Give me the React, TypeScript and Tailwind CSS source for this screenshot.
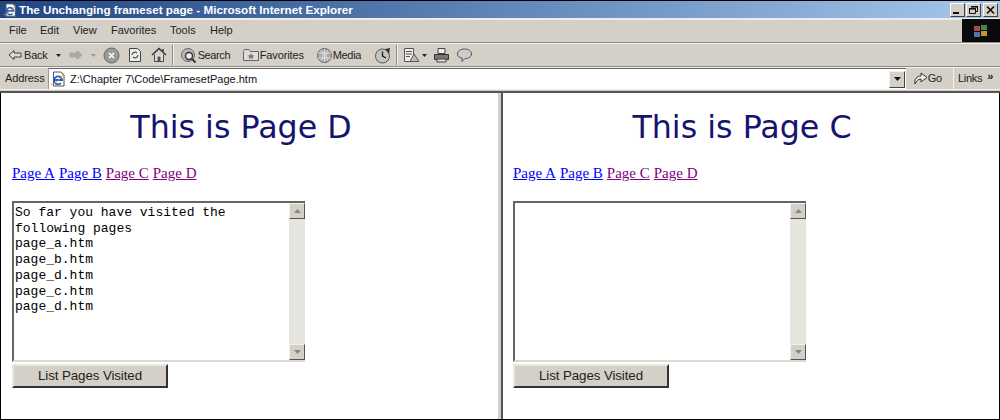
import React from "react";

const ui = "font-['Liberation_Sans',Arial,sans-serif]";

function Globe({ s = 14 }: { s?: number }) {
  return (
    <svg width={s} height={s} viewBox="0 0 16 16" className="shrink-0">
      <path d="M3.5 1h7.5l3 3v11h-10.5z" fill="#fff" stroke="#555" strokeWidth="1" />
      <path d="M4.5 9h7.5a4 4 0 1 0-1 3" fill="none" stroke="#1c62c4" strokeWidth="1.8" />
      <path d="M1 13.5C5 13 11 8 14 2" fill="none" stroke="#e0a030" strokeWidth="1" />
    </svg>
  );
}

function WinBtn({ children }: { children: React.ReactNode }) {
  return (
    <div className="w-[15px] h-[14px] bg-[#d4d0c8] border border-t-white border-l-white border-r-[#404040] border-b-[#404040] flex items-center justify-center">
      <svg width="11" height="10" viewBox="0 0 11 10">{children}</svg>
    </div>
  );
}

function Arrow({ dir, gray }: { dir: "l" | "r"; gray?: boolean }) {
  const c = gray ? "#a8a8a8" : "#404040";
  return (
    <svg width="14" height="12" viewBox="0 0 14 12" className="shrink-0">
      {dir === "l" ? (
        <path d="M1 6L6 1.5V4H13V8H6V10.5Z" fill={gray ? c : "#ddd"} stroke={c} strokeWidth="1" />
      ) : (
        <path d="M13 6L8 1.5V4H1V8H8V10.5Z" fill={c} stroke={c} strokeWidth="1" />
      )}
    </svg>
  );
}

function Caret({ c = "#222" }: { c?: string }) {
  return (
    <svg width="5" height="3" viewBox="0 0 5 3" className="block shrink-0">
      <path d="M0 0H5L2.5 3Z" fill={c} />
    </svg>
  );
}

function ScrollBtn({ up }: { up?: boolean }) {
  return (
    <div className="w-[16px] h-[16px] bg-[#d4d0c8] border border-t-[#f2f0ec] border-l-[#f2f0ec] border-r-[#555] border-b-[#555] flex items-center justify-center">
      <svg width="7" height="4" viewBox="0 0 7 4">
        <path d={up ? "M0 4H7L3.5 0Z" : "M0 0H7L3.5 4Z"} fill="#888" />
      </svg>
    </div>
  );
}

function Frame({ page, lines, right }: { page: string; lines: string[]; right?: boolean }) {
  return (
    <div className={`${right ? "flex-1 pl-[10px]" : "w-[497px] pl-[11px]"} pt-[12px] bg-white min-w-0`}>
      <h1 className="font-['DejaVu_Sans',Verdana,sans-serif] text-[31.7px] leading-[44px] font-normal text-[#14146e] text-center h-[44px] w-[458px]">
        This is Page {page}
      </h1>
      <div className="mt-[15px] h-[18px] leading-[18px] text-[15px] font-['Liberation_Serif','Times_New_Roman',serif] flex gap-[4px]">
        <a className="underline text-[#0000ff]">Page A</a>
        <a className="underline text-[#0000ff]">Page B</a>
        <a className="underline text-[#800080]">Page C</a>
        <a className="underline text-[#800080]">Page D</a>
      </div>
      <div className="mt-[19px] w-[293px] h-[161px] flex border-2 border-t-[#666] border-l-[#666] border-r-0 border-b-[#dcdad4]">
        <div className="flex-1 pl-[1px] pt-[2px] font-['Liberation_Mono','Courier_New',monospace] text-[13px] leading-[15.7px] text-black whitespace-pre">
          {lines.join("\n")}
        </div>
        <div className="w-[16px] bg-[#e6e4df] flex flex-col justify-between">
          <ScrollBtn up />
          <ScrollBtn />
        </div>
      </div>
      <div className={`mt-[2px] w-[156px] h-[24px] bg-[#d4d0c8] border-2 border-t-[#e8e6e1] border-l-[#e8e6e1] border-r-[#333] border-b-[#333] flex items-center justify-center ${ui} text-[13.33px] text-[#222] tracking-[-0.1px]`}>
        List Pages Visited
      </div>
    </div>
  );
}

export default function App() {
  return (
    <div className={`w-[1000px] h-[420px] overflow-hidden bg-white flex flex-col ${ui}`}>
      {/* title bar */}
      <div className="h-[18px] shrink-0 border-t border-black bg-gradient-to-r from-[#1f4684] to-[#a7c8ec] flex items-center pl-[3px] pr-[2px]">
        <Globe s={14} />
        <span className="ml-[2px] text-white font-bold text-[11.7px] leading-none">
          The Unchanging frameset page - Microsoft Internet Explorer
        </span>
        <div className="ml-auto flex">
          <WinBtn>
            <rect x="1" y="7" width="6" height="2" fill="#111" />
          </WinBtn>
          <div className="ml-[1px]">
            <WinBtn>
              <path d="M3.5 1.5h6v5h-2M1.5 3.5h6v5h-6z" fill="none" stroke="#111" strokeWidth="1" />
              <rect x="3" y="1" width="7" height="1.6" fill="#111" />
              <rect x="1" y="3" width="7" height="1.6" fill="#111" />
            </WinBtn>
          </div>
          <div className="ml-[2px]">
            <WinBtn>
              <path d="M2 1.5L9 8.5M9 1.5L2 8.5" stroke="#111" strokeWidth="1.7" />
            </WinBtn>
          </div>
        </div>
      </div>

      {/* menu */}
      <div className="h-[25px] shrink-0 bg-[#d4d0c8] border-t-2 border-t-[#eeece8] border-b-[1px] border-b-[#8f8d88] flex items-stretch text-[11px] text-[#222]">
        <div className="flex items-center pl-[9px] flex-1 pb-[1px]">
          <span className="w-[31px]">File</span>
          <span className="w-[33px]">Edit</span>
          <span className="w-[38px]">View</span>
          <span className="w-[59px]">Favorites</span>
          <span className="w-[40px]">Tools</span>
          <span>Help</span>
        </div>
        <div className="w-[38px] -mt-[1px] bg-[#0a0a0c] flex items-center justify-center">
          <svg width="16" height="14" viewBox="0 0 16 14" className="opacity-85">
            <rect x="1" y="2" width="6" height="5" fill="#c85848" />
            <rect x="8" y="1" width="6" height="5" fill="#4f9a58" />
            <rect x="1" y="8" width="6" height="5" fill="#5a86c8" />
            <rect x="8" y="7" width="6" height="5" fill="#e0b040" />
          </svg>
        </div>
      </div>

      {/* toolbar */}
      <div className="h-[24px] shrink-0 bg-[#d4d0c8] border-t border-t-[#f2f0ec] border-b border-b-[#8f8d88] flex items-center pl-[8px] text-[11px] text-[#222]">
        <Arrow dir="l" />
        <span className="ml-[2px] tracking-[-0.2px]">Back</span>
        <span className="ml-[8px]"><Caret /></span>
        <span className="ml-[8px]"><Arrow dir="r" gray /></span>
        <span className="ml-[8px]"><Caret c="#999" /></span>
        <svg width="17" height="17" viewBox="0 0 17 17" className="ml-[7px] shrink-0">
          <circle cx="8.5" cy="8.5" r="7.5" fill="#9a9a96" stroke="#666" />
          <path d="M6 6L11 11M11 6L6 11" stroke="#fff" strokeWidth="1.6" />
        </svg>
        <svg width="14" height="16" viewBox="0 0 14 16" className="ml-[8px] shrink-0">
          <path d="M1.5 1.5h8l3 3v10h-11z" fill="#eee" stroke="#444" />
          <path d="M4 8a3 3 0 0 1 5-2M10 8a3 3 0 0 1-5 2" fill="none" stroke="#555" strokeWidth="1.3" />
        </svg>
        <svg width="16" height="16" viewBox="0 0 16 16" className="ml-[9px] shrink-0">
          <path d="M1 8L8 1.5L15 8" fill="none" stroke="#333" strokeWidth="1.5" />
          <path d="M3.5 7.5V14.5H12.5V7.5" fill="#ddd" stroke="#444" />
          <rect x="6.5" y="9.5" width="3" height="5" fill="#555" />
          <rect x="11" y="2" width="2" height="4" fill="#555" />
        </svg>
        <div className="ml-[5px] mr-[6px] h-[20px] w-[2px] bg-[#f2f0ec] border-l border-l-[#8f8d88]" />
        <svg width="17" height="17" viewBox="0 0 17 17" className="shrink-0">
          <circle cx="8" cy="8" r="6.5" fill="#b8b8b4" stroke="#666" />
          <circle cx="9" cy="9" r="3.5" fill="#eee" stroke="#333" strokeWidth="1.4" />
          <path d="M12 12L15.5 15.5" stroke="#333" strokeWidth="2" />
        </svg>
        <span className="ml-[1px] w-[32px] tracking-[-0.4px] whitespace-nowrap">Search</span>
        <svg width="16" height="14" viewBox="0 0 16 14" className="ml-[13px] shrink-0">
          <path d="M0.5 3.5V12.5H15.5V3.5H7.5L6 1.5H1.5z" fill="#ddd" stroke="#666" />
          <path d="M8 5L9 7.3L11.5 7.5L9.6 9L10.2 11.3L8 10L5.8 11.3L6.4 9L4.5 7.5L7 7.3Z" fill="#777" />
        </svg>
        <span className="ml-[1px] w-[44px] tracking-[-0.1px] whitespace-nowrap">Favorites</span>
        <svg width="15" height="17" viewBox="0 0 15 17" className="ml-[13px] shrink-0">
          <circle cx="7.5" cy="8.5" r="7" fill="#aaa" stroke="#666" />
          <path d="M1 6H14M1 11H14M7.5 2V15M4 3Q8 8 4 14M11 3Q7 8 11 14" fill="none" stroke="#eee" strokeWidth="0.8" />
        </svg>
        <span className="ml-[1px] w-[29px] tracking-[-0.3px] whitespace-nowrap">Media</span>
        <svg width="17" height="17" viewBox="0 0 17 17" className="ml-[12px] shrink-0">
          <circle cx="8.5" cy="9" r="7" fill="#c4c4c0" stroke="#555" />
          <path d="M8.5 4.5V9L12 11" fill="none" stroke="#222" strokeWidth="1.4" />
          <path d="M11 2L16 1L15 7Z" fill="#333" />
        </svg>
        <div className="ml-[5px] mr-[5px] h-[20px] w-[2px] bg-[#f2f0ec] border-l border-l-[#8f8d88]" />
        <svg width="17" height="16" viewBox="0 0 17 16" className="shrink-0">
          <path d="M1.5 1.5h9v13h-9z" fill="#eee" stroke="#555" />
          <path d="M3 4.5h6M3 7h6M3 9.5h4" stroke="#555" />
          <path d="M7 14.5L11 7L16 14.5Z" fill="#bbb" stroke="#555" />
        </svg>
        <span className="ml-[2px]"><Caret /></span>
        <svg width="17" height="16" viewBox="0 0 17 16" className="ml-[6px] shrink-0">
          <path d="M5 1.5h7v5H5z" fill="#eee" stroke="#444" />
          <path d="M1.5 7.5h14v5h-14z" fill="#777" stroke="#333" />
          <path d="M4 12h9v3H4z" fill="#ddd" stroke="#444" />
        </svg>
        <svg width="17" height="16" viewBox="0 0 17 16" className="ml-[6px] shrink-0">
          <path d="M8.5 2C12.5 2 15.5 4 15.5 7S12.5 11.5 9 11.5L6 14.5V11.2C3 10.5 1.5 9 1.5 7C1.5 4 4.5 2 8.5 2Z" fill="#ccc" stroke="#555" />
        </svg>
      </div>

      {/* address */}
      <div className="h-[22px] shrink-0 bg-[#d4d0c8] border-t border-t-[#f2f0ec] flex items-center text-[11px] text-[#222]">
        <span className="ml-[5px] w-[43px] tracking-[-0.1px]">Address</span>
        <div className="h-[21px] w-[858px] bg-white border-t border-l border-t-[#666] border-l-[#999] flex items-center pl-[1px]">
          <Globe s={16} />
          <span className="ml-[4px] text-[11px] text-[#111]">Z:\Chapter 7\Code\FramesetPage.htm</span>
          <div className="ml-auto mr-[1px] w-[16px] h-[17px] bg-[#d4d0c8] border border-t-[#f2f0ec] border-l-[#f2f0ec] border-r-[#444] border-b-[#444] flex items-center justify-center">
            <svg width="7" height="4" viewBox="0 0 7 4"><path d="M0 0H7L3.5 4Z" fill="#111" /></svg>
          </div>
        </div>
        <div className="w-[48px] h-[21px] border-r border-r-[#f2f0ec] flex items-center justify-end pr-[11px] shrink-0">
          <svg width="15" height="15" viewBox="0 0 15 15">
            <path d="M2 13C1 8 4 5 8 5V2L14 6.5L8 11V8C5 8 3.5 10 2 13Z" fill="#eee" stroke="#333" />
          </svg>
          <span className="tracking-[-0.2px]">Go</span>
        </div>
        <span className="ml-[4px] tracking-[-0.3px]">Links</span>
        <span className="ml-[5px] -mt-[5px] text-[11px] font-bold leading-none">»</span>
      </div>

      {/* frames */}
      <div className="flex-1 min-h-0 flex flex-col border-b border-b-black">
        <div className="h-[4px] shrink-0 bg-[#d4d0c8] border-t border-t-[#f2f0ec] border-b-2 border-b-[#555]" />
        <div className="flex-1 min-h-0 flex border-l border-l-black border-r border-r-black">
          <Frame
            page="D"
            lines={[
              "So far you have visited the",
              "following pages",
              "page_a.htm",
              "page_b.htm",
              "page_d.htm",
              "page_c.htm",
              "page_d.htm",
            ]}
          />
          <div className="w-[3px] shrink-0 bg-[#d4d0c8]" />
          <div className="w-[2px] shrink-0 bg-[#555]" />
          <Frame page="C" lines={[]} right />
        </div>
      </div>
    </div>
  );
}
